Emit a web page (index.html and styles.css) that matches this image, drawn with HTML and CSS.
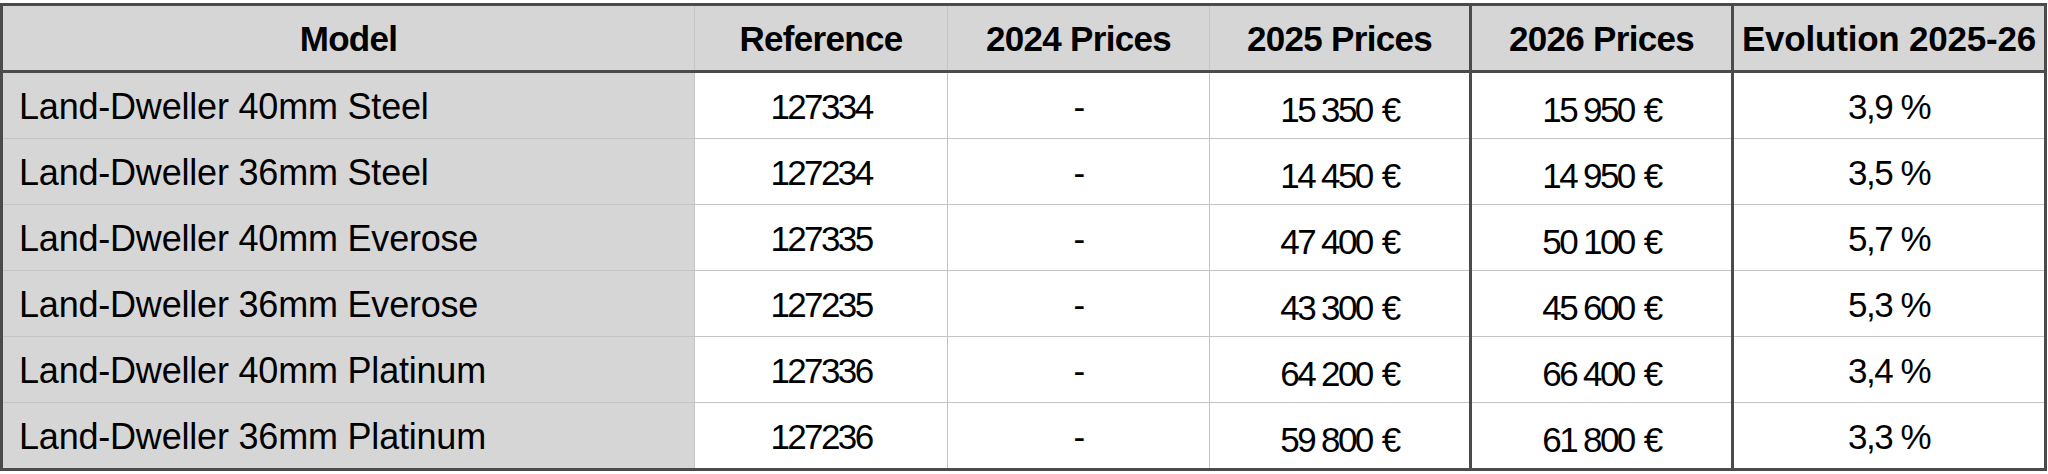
FILE: index.html
```html
<!DOCTYPE html>
<html lang="en">
<head>
<meta charset="utf-8">
<title>Land-Dweller Prices</title>
<link rel="stylesheet" href="styles.css">
</head>
<body>
<table class="prices">
  <colgroup>
    <col class="c-model">
    <col class="c-ref">
    <col class="c-2024">
    <col class="c-2025">
    <col class="c-2026">
    <col class="c-evo">
  </colgroup>
  <thead>
    <tr>
      <th>Model</th>
      <th>Reference</th>
      <th>2024 Prices</th>
      <th>2025 Prices</th>
      <th class="sep">2026 Prices</th>
      <th class="sep evo">Evolution 2025-26</th>
    </tr>
  </thead>
  <tbody>
    <tr>
      <td class="model">Land-Dweller 40mm Steel</td>
      <td class="num">127334</td>
      <td>-</td>
      <td class="num">15<span class="ts">&#8239;</span>350 €</td>
      <td class="num sep">15<span class="ts">&#8239;</span>950 €</td>
      <td class="pct sep">3,9 %</td>
    </tr>
    <tr>
      <td class="model">Land-Dweller 36mm Steel</td>
      <td class="num">127234</td>
      <td>-</td>
      <td class="num">14<span class="ts">&#8239;</span>450 €</td>
      <td class="num sep">14<span class="ts">&#8239;</span>950 €</td>
      <td class="pct sep">3,5 %</td>
    </tr>
    <tr>
      <td class="model">Land-Dweller 40mm Everose</td>
      <td class="num">127335</td>
      <td>-</td>
      <td class="num">47<span class="ts">&#8239;</span>400 €</td>
      <td class="num sep">50<span class="ts">&#8239;</span>100 €</td>
      <td class="pct sep">5,7 %</td>
    </tr>
    <tr>
      <td class="model">Land-Dweller 36mm Everose</td>
      <td class="num">127235</td>
      <td>-</td>
      <td class="num">43<span class="ts">&#8239;</span>300 €</td>
      <td class="num sep">45<span class="ts">&#8239;</span>600 €</td>
      <td class="pct sep">5,3 %</td>
    </tr>
    <tr>
      <td class="model">Land-Dweller 40mm Platinum</td>
      <td class="num">127336</td>
      <td>-</td>
      <td class="num">64<span class="ts">&#8239;</span>200 €</td>
      <td class="num sep">66<span class="ts">&#8239;</span>400 €</td>
      <td class="pct sep">3,4 %</td>
    </tr>
    <tr>
      <td class="model">Land-Dweller 36mm Platinum</td>
      <td class="num">127236</td>
      <td>-</td>
      <td class="num">59<span class="ts">&#8239;</span>800 €</td>
      <td class="num sep">61<span class="ts">&#8239;</span>800 €</td>
      <td class="pct sep">3,3 %</td>
    </tr>
  </tbody>
</table>
</body>
</html>
```
FILE: styles.css
```css
html, body {
  margin: 0;
  padding: 0;
  background: #ffffff;
}

body {
  padding-top: 3px;
  font-family: "Liberation Sans", Arial, Helvetica, sans-serif;
  color: #000;
}

.prices {
  border-collapse: collapse;
  table-layout: fixed;
  width: 2044px;
  border: 3px solid #4b4b4b;
}

.c-model { width: 693px; }
.c-ref { width: 253px; }
.c-2024 { width: 262px; }
.c-2025 { width: 261px; }
.c-2026 { width: 262px; }
.c-evo { width: 313px; }

.prices th,
.prices td {
  border: 1px solid #c4c4c4;
  padding: 0;
  text-align: center;
  vertical-align: middle;
  line-height: 1;
  white-space: nowrap;
}

.prices th {
  background: #d6d6d6;
  font-weight: bold;
  font-size: 35px;
  height: 64px;
  border-bottom: 3px solid #4b4b4b;
  letter-spacing: -0.7px;
}

.prices th.evo {
  letter-spacing: -0.2px;
}

.prices td {
  height: 63px;
  padding-top: 2px;
  font-weight: normal;
  font-size: 35px;
  letter-spacing: -1.5px;
}

.prices td.num {
  letter-spacing: -2.6px;
  word-spacing: 3px;
}

.prices td.pct {
  letter-spacing: -1.5px;
}

.ts {
  display: inline-block;
  width: 7px;
  overflow: hidden;
  letter-spacing: 0;
  word-spacing: 0;
}

.prices td.model {
  background: #d6d6d6;
  text-align: left;
  padding-left: 16px;
  font-size: 36px;
  letter-spacing: -0.2px;
}

.prices .sep {
  border-left: 3px solid #4b4b4b;
}
```
